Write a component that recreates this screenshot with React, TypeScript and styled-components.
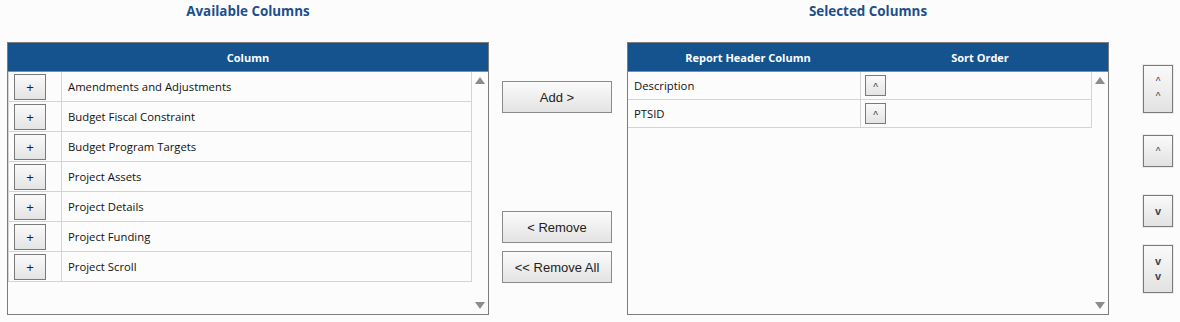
import React from 'react';
import styled, { createGlobalStyle } from "styled-components";

const GlobalStyle = createGlobalStyle`
    body {
        margin: 0;
        background: #fcfcfc;
        font-family: "Open Sans", "Noto Sans", sans-serif;
    }
`

const available = [
    "Amendments and Adjustments",
    "Budget Fiscal Constraint",
    "Budget Program Targets",
    "Project Assets",
    "Project Details",
    "Project Funding",
    "Project Scroll",
]

const selected = ["Description", "PTSID"]

const ScrollArrows = () => (
    <ScrollBar>
        <svg width="10" height="7" viewBox="0 0 10 7"><polygon points="0,7 5,0 10,7" fill="#8c8c8c" /></svg>
        <svg width="10" height="7" viewBox="0 0 10 7"><polygon points="0,0 10,0 5,7" fill="#8c8c8c" /></svg>
    </ScrollBar>
)

export default function App() {
    return (
        <>
            <GlobalStyle />
            <Page>
                <Section width={482}>
                    <Title>Available Columns</Title>
                    <Panel>
                        <Header>
                            <HeaderCell>Column</HeaderCell>
                        </Header>
                        <Body>
                            <Rows>
                                {available.map((name) => (
                                    <AvailRow key={name}>
                                        <BtnCell>
                                            <PlusButton>+</PlusButton>
                                        </BtnCell>
                                        <NameCell>{name}</NameCell>
                                    </AvailRow>
                                ))}
                            </Rows>
                            <ScrollArrows />
                        </Body>
                    </Panel>
                </Section>

                <Middle>
                    <MoveButton>Add &gt;</MoveButton>
                    <MoveButton top={98}>&lt; Remove</MoveButton>
                    <MoveButton top={8}>&lt;&lt; Remove All</MoveButton>
                </Middle>

                <Section width={482}>
                    <Title>Selected Columns</Title>
                    <Panel>
                        <Header split>
                            <HeaderCell>Report Header Column</HeaderCell>
                            <HeaderCell>Sort Order</HeaderCell>
                        </Header>
                        <Body>
                            <Rows>
                                {selected.map((name) => (
                                    <SelRow key={name}>
                                        <SelName>{name}</SelName>
                                        <SortCell>
                                            <SortButton>^</SortButton>
                                        </SortCell>
                                    </SelRow>
                                ))}
                            </Rows>
                            <ScrollArrows />
                        </Body>
                    </Panel>
                </Section>

                <Order>
                    <OrderButton tall>^<br />^</OrderButton>
                    <OrderButton top={22}>^</OrderButton>
                    <OrderButton top={28} bold>v</OrderButton>
                    <OrderButton tall top={18} bold>v<br />v</OrderButton>
                </Order>
            </Page>
        </>
    );
}

const Page = styled.div`
    display: flex;
    align-items: flex-start;
    padding-left: 7px;
    width: 1180px;
    height: 322px;
    box-sizing: border-box;
`

const Section = styled.div<{ width: number }>`
    display: flex;
    flex-direction: column;
    width: ${(p) => p.width}px;
`

const Title = styled.div`
    height: 42px;
    padding-top: 2px;
    box-sizing: border-box;
    text-align: center;
    color: #1d4f8b;
    font-weight: bold;
    font-size: 13.4px;
`

const Panel = styled.div`
    height: 273px;
    border: 1px solid #7d7d7d;
    box-sizing: border-box;
    display: flex;
    flex-direction: column;
    background: #fcfcfc;
`

const Header = styled.div<{ split?: boolean }>`
    height: 28px;
    flex: none;
    background: #15538f;
    border-bottom: 1px solid #8a8a8a;
    display: grid;
    grid-template-columns: ${(p) => (p.split ? "240px 1fr 16px" : "1fr")};
`

const HeaderCell = styled.div`
    display: flex;
    align-items: center;
    justify-content: center;
    color: #ffffff;
    font-weight: bold;
    font-size: 11px;
`

const Body = styled.div`
    flex: 1;
    display: flex;
`

const Rows = styled.div`
    flex: 1;
    display: flex;
    flex-direction: column;
`

const ScrollBar = styled.div`
    width: 16px;
    display: flex;
    flex-direction: column;
    justify-content: space-between;
    align-items: center;
    padding: 5px 0 5px 0;
    box-sizing: border-box;
`

const AvailRow = styled.div`
    display: flex;
    height: 30px;
    box-sizing: border-box;
    border-bottom: 1px solid #d4d4d4;
    border-right: 1px solid #d4d4d4;
    border-left: 1px solid #d4d4d4;
`

const BtnCell = styled.div`
    width: 53px;
    border-right: 1px solid #d4d4d4;
    padding: 2px 0 0 5px;
    box-sizing: border-box;
`

const PlusButton = styled.div`
    width: 32px;
    height: 26px;
    box-sizing: border-box;
    border: 1px solid #7a7a7a;
    background: linear-gradient(#fafafa, #e4e4e4);
    display: flex;
    align-items: center;
    justify-content: center;
    font-family: "Liberation Sans", Arial, sans-serif;
    font-size: 13px;
    color: #222;
`

const NameCell = styled.div`
    display: flex;
    align-items: center;
    padding-left: 6px;
    font-size: 11.3px;
    color: #111;
`

const SelRow = styled.div`
    display: flex;
    height: 28px;
    box-sizing: border-box;
    border-bottom: 1px solid #d4d4d4;
    border-right: 1px solid #d4d4d4;
`

const SelName = styled.div`
    width: 233px;
    border-right: 1px solid #d4d4d4;
    display: flex;
    align-items: center;
    padding-left: 6px;
    box-sizing: border-box;
    font-size: 11.3px;
    color: #111;
`

const SortCell = styled.div`
    display: flex;
    align-items: center;
    padding-left: 4px;
`

const SortButton = styled.div`
    width: 21px;
    height: 21px;
    box-sizing: border-box;
    border: 1px solid #7a7a7a;
    background: linear-gradient(#fafafa, #e4e4e4);
    display: flex;
    align-items: center;
    justify-content: center;
    font-family: "Liberation Sans", Arial, sans-serif;
    font-size: 10px;
    color: #333a48;
    padding-top: 3px;
`

const Middle = styled.div`
    display: flex;
    flex-direction: column;
    margin: 81px 15px 0 13px;
`

const MoveButton = styled.div<{ top?: number }>`
    width: 110px;
    height: 32px;
    margin-top: ${(p) => p.top || 0}px;
    box-sizing: border-box;
    border: 1px solid #8a8a8a;
    background: linear-gradient(#fbfbfb, #e3e3e3);
    display: flex;
    align-items: center;
    justify-content: center;
    font-family: "Liberation Sans", Arial, sans-serif;
    font-size: 13px;
    color: #222;
`

const Order = styled.div`
    display: flex;
    flex-direction: column;
    margin: 65px 0 0 34px;
`

const OrderButton = styled.div<{ top?: number; tall?: boolean; bold?: boolean }>`
    width: 30px;
    height: ${(p) => (p.tall ? 48 : 32)}px;
    margin-top: ${(p) => p.top || 0}px;
    box-sizing: border-box;
    border: 1px solid #7a7a7a;
    box-shadow: 0 0 0 1px #ececec;
    background: linear-gradient(#fafafa, #e2e2e2);
    display: flex;
    align-items: center;
    justify-content: center;
    text-align: center;
    font-family: "Liberation Sans", Arial, sans-serif;
    font-size: ${(p) => (p.bold ? 11 : 10)}px;
    font-weight: ${(p) => (p.bold ? "bold" : "normal")};
    line-height: 15px;
    color: #3c4352;
`
